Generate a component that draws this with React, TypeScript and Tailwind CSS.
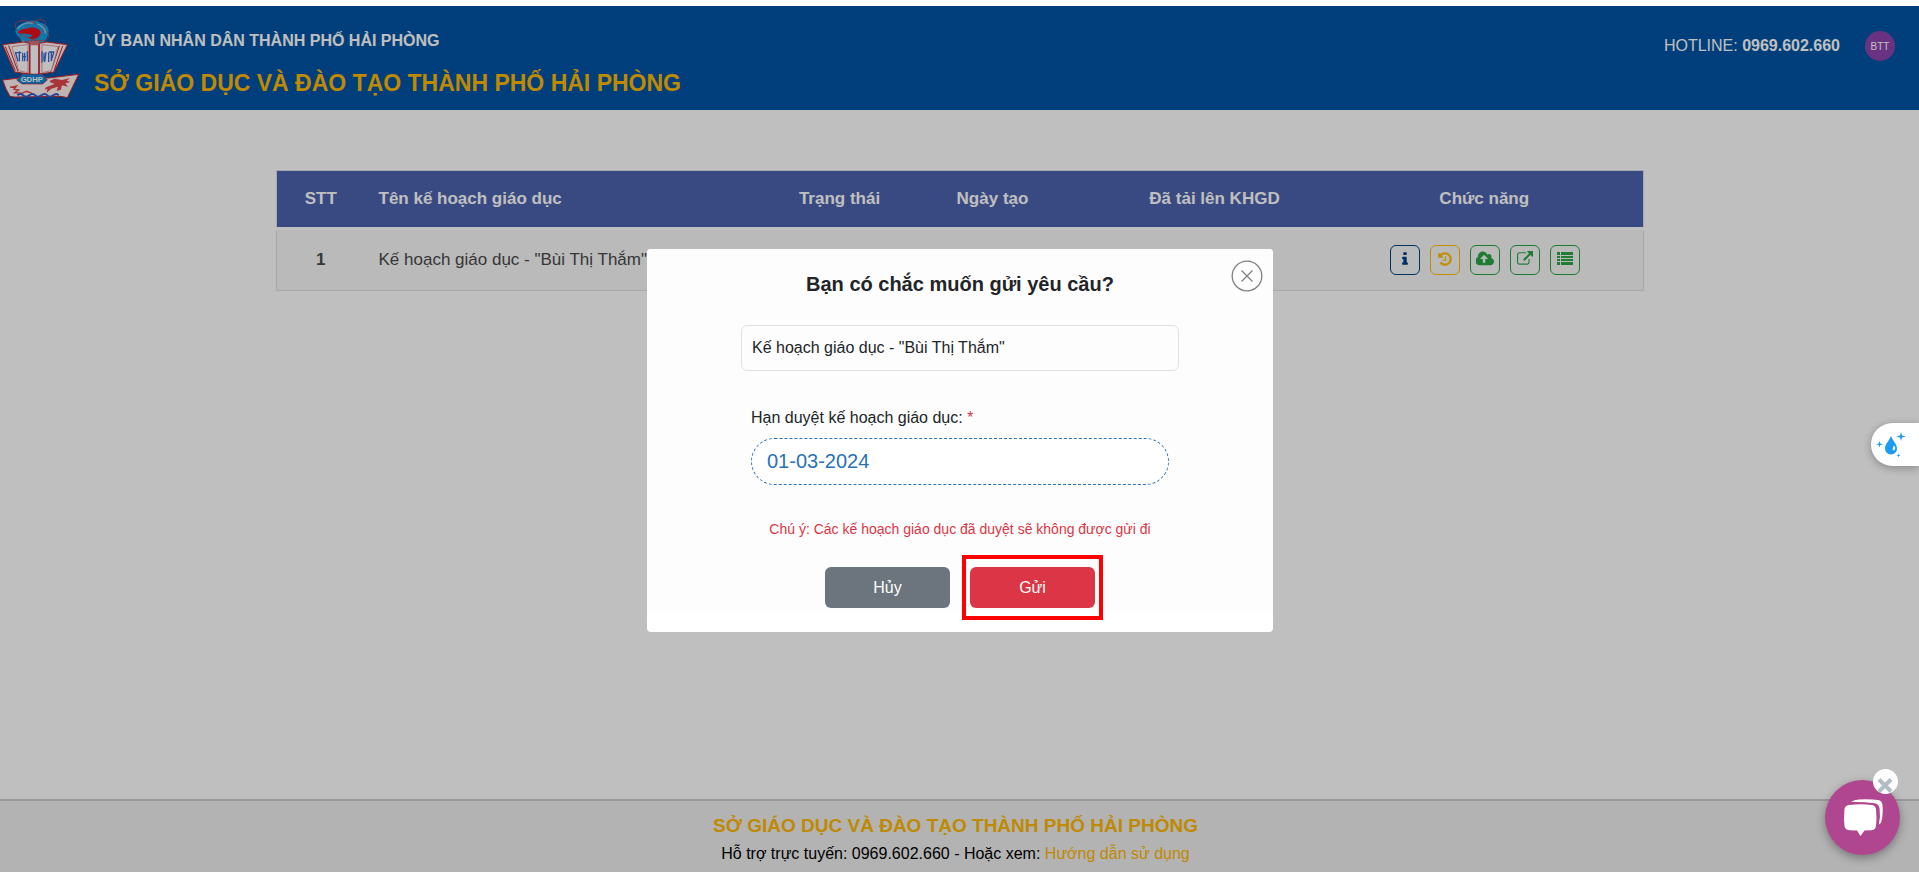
import type { ReactNode } from "react";

const columns = [
  { label: "STT", cell: "w-[88px] text-center" },
  { label: "Tên kế hoạch giáo dục", cell: "pl-3.5 text-left" },
  { label: "Trạng thái", cell: "w-[84px] text-center" },
  { label: "Ngày tạo", cell: "w-[222px] text-center" },
  { label: "Đã tải lên KHGD", cell: "w-[222px] text-center" },
  { label: "Chức năng", cell: "w-[318px] text-center" },
];

const actions = [
  {
    label: "Thông tin",
    tone: "border-[#004085] text-[#004085]",
    viewBox: "0 0 1792 1792",
    path: "M1216 1344v128q0 26-19 45t-45 19h-512q-26 0-45-19t-19-45v-128q0-26 19-45t45-19h64v-384h-64q-26 0-45-19t-19-45v-128q0-26 19-45t45-19h384q26 0 45 19t19 45v576h64q26 0 45 19t19 45zm-128-1152v192q0 26-19 45t-45 19h-256q-26 0-45-19t-19-45v-192q0-26 19-45t45-19h256q26 0 45 19t19 45z",
  },
  {
    label: "Lịch sử",
    tone: "border-[#ffc107] text-[#ffc107]",
    viewBox: "0 0 1792 1792",
    path: "M1664 896q0 156-61 298t-164 245-245 164-298 61q-172 0-327-72.5t-264-204.5q-7-10-6.5-22.5t8.5-20.5l137-138q10-9 25-9 16 2 23 12 73 95 179 147t225 52q104 0 198.5-40.5t163.5-109.5 109.5-163.5 40.5-198.5-40.5-198.5-109.5-163.5-163.5-109.5-198.5-40.5q-98 0-188 35.5t-160 101.5l137 138q31 30 14 69-17 40-59 40h-448q-26 0-45-19t-19-45v-448q0-42 40-59 39-17 69 14l130 129q107-101 244.5-156.5t284.5-55.5q156 0 298 61t245 164 164 245 61 298zm-640-288v448q0 14-9 23t-23 9h-320q-14 0-23-9t-9-23v-64q0-14 9-23t23-9h224v-352q0-14 9-23t23-9h64q14 0 23 9t9 23z",
  },
  {
    label: "Tải lên",
    tone: "border-[#28a745] text-[#28a745]",
    viewBox: "0 64 1856 1650",
    path: "M1216 864q0-14-9-23l-352-352q-9-9-23-9t-23 9l-351 351q-10 12-10 24 0 14 9 23t23 9h224v352q0 13 9.5 22.5t22.5 9.5h192q13 0 22.5-9.5t9.5-22.5v-352h224q13 0 22.5-9.5t9.5-22.5zm640 288q0 159-112.5 271.5t-271.5 112.5h-1088q-185 0-316.5-131.5t-131.5-316.5q0-130 70-240t188-165q-2-30-2-43 0-212 150-362t362-150q156 0 285.5 87t188.5 231q71-62 166-62 106 0 181 75t75 181q0 76-41 138 130 31 213.5 135.5t83.5 238.5z",
  },
  {
    label: "Mở liên kết",
    tone: "border-[#28a745] text-[#28a745]",
    viewBox: "0 0 1792 1792",
    path: "M1408 928v320q0 119-84.5 203.5t-203.5 84.5h-832q-119 0-203.5-84.5t-84.5-203.5v-832q0-119 84.5-203.5t203.5-84.5h704q14 0 23 9t9 23v64q0 14-9 23t-23 9h-704q-66 0-113 47t-47 113v832q0 66 47 113t113 47h832q66 0 113-47t47-113v-320q0-14 9-23t23-9h64q14 0 23 9t9 23zm384-864v512q0 26-19 45t-45 19-45-19l-176-176-652 652q-10 10-23 10t-23-10l-114-114q-10-10-10-23t10-23l652-652-176-176q-19-19-19-45t19-45 45-19h512q26 0 45 19t19 45z",
  },
  {
    label: "Danh sách",
    tone: "border-[#28a745] text-[#28a745]",
    viewBox: "0 0 16 16",
    path: "M0 1h3v3H0zM4 1h12v3H4zM0 5h3v2H0zM4 5h12v2H4zM0 8h3v2H0zM4 8h12v2H4zM0 11h3v3H0zM4 11h12v3H4z",
  },
];

function Logo() {
  return (
    <svg viewBox="0 54 240 240" className="size-20 shrink-0" role="img" aria-label="GDHP">
      <path d="M46 92c4-16 18-20 28-24 14-10 34-8 46 0 14 2 26 12 26 24 0 14-6 20-8 28-10 14-30 20-42 18-16 0-30-10-34-22-8-6-16-14-16-24z" fill="#14a0e4" />
      <g fill="none" stroke="#d8404c" strokeWidth="2">
        <ellipse cx="96" cy="92" rx="54" ry="24" transform="rotate(22 96 92)" />
        <ellipse cx="98" cy="92" rx="46" ry="22" transform="rotate(-38 98 92)" />
      </g>
      <path d="M52 86c12-14 30-20 46-16M112 72c16 6 26 18 24 28M66 122c6 6 12 8 18 8" fill="none" stroke="#7fd3f5" strokeWidth="4" />
      <path d="M54 100c4-14 16-12 26-14 8-4 22-6 32 0 12 4 12 16 4 24-8 8-26 8-36 2 8 1 14-2 18-6-14-6-30-4-44-6z" fill="#e8101c" />
      <path d="M8 134l62-8 18 4v92l-44-6z" fill="#fff1f1" stroke="#d8262e" strokeWidth="3" />
      <path d="M202 134l-62-8-22 4v92l44-6z" fill="#fff1f1" stroke="#d8262e" strokeWidth="3" />
      <path d="M16 140l30 72M26 137l28 78M188 138l-26 74M178 137l-26 78" stroke="#d8262e" strokeWidth="3" fill="none" />
      <path d="M36 140l48-6v84l-28-6zM174 140l-48-6v84l28-6z" fill="#fff" stroke="#d9747b" strokeWidth="2" />
      <path d="M46 156l8 28M58 154v30M48 158h16M68 158v26M74 158v26M66 170h12M82 154v30M126 154v34M132 158v26M138 156l-4 30M146 158v28M154 154v30M146 156h16M162 154l-8 28" stroke="#3c6bd0" strokeWidth="4" fill="none" />
      <path d="M90 124h26v98l-12 8-14-8z" fill="#fff" stroke="#d8262e" strokeWidth="3" />
      <path d="M86 124h34l-6 12H92z" fill="#d8737a" />
      <path d="M8 240l50-6h88l90-11-34 70-20-4-138 2-14-2-12-22z" fill="#fff1f1" stroke="#d8262e" strokeWidth="3" />
      <path d="M50 240l18-18h58l16 18-14 12H66z" fill="#0a86d6" stroke="#d8262e" strokeWidth="2" />
      <text x="62" y="246" fill="#fff" fontSize="23" fontWeight="700" className="font-['Liberation_Sans',sans-serif]">
        GDHP
      </text>
      <path d="M150 242l14-6 22 4 24-6-10 8 12 4-16 4 8 10-18-4-4 14-12 2 4-12-20 6-14 12 2-12-8 4 4-8 26-10-14-6z" fill="#e0454c" />
      <path d="M30 262l20-4-8 10 14 2-12 8 24 2M60 282l20-8 16 6" fill="none" stroke="#e0454c" strokeWidth="4" />
      <path d="M52 286q10-8 18 0t18 0 18 0 18 0 18 0 18 0 16 0" fill="none" stroke="#3158c4" strokeWidth="6" />
    </svg>
  );
}

function Field({ children, className }: { children: ReactNode; className: string }) {
  return <div className={className}>{children}</div>;
}

function PageHeader() {
  return (
    <header className="flex h-[104px] items-start bg-[#0055a4] pt-3 text-white">
      <Logo />
      <div className="ml-3.5 pt-[11px]">
        <p className="text-base/6 font-bold">ỦY BAN NHÂN DÂN THÀNH PHỐ HẢI PHÒNG</p>
        <h1 className="mt-3.5 text-[23px]/8 font-bold text-[#ffb700]">SỞ GIÁO DỤC VÀ ĐÀO TẠO THÀNH PHỐ HẢI PHÒNG</h1>
      </div>
      <div className="ml-auto flex items-center pt-[13px] pr-6">
        <p className="text-base/6">
          HOTLINE: <b>0969.602.660</b>
        </p>
        <button className="ml-[25px] size-[30px] rounded-full bg-[#8e44ad] text-[10px]">BTT</button>
      </div>
    </header>
  );
}

function PlanTable() {
  return (
    <table className="mx-auto w-[1368px] max-w-full table-fixed border-collapse border border-[#dee2e6]">
      <thead className="bg-[#4c63af] text-white">
        <tr className="h-[58px] border-b-3 border-[#fff]">
          {columns.map((c) => (
            <th key={c.label} className={`${c.cell} text-[17px] font-bold whitespace-nowrap`}>
              {c.label}
            </th>
          ))}
        </tr>
      </thead>
      <tbody className="bg-[#f8f8f8] text-[#4a4a4a]">
        <tr className="h-[62px]">
          <td className="text-center text-[17px] font-bold">1</td>
          <td className="pl-3.5 text-[17px] whitespace-nowrap">Kế hoạch giáo dục - "Bùi Thị Thắm"</td>
          <td />
          <td />
          <td />
          <td>
            <div className="flex justify-center gap-2.5 pl-0.5">
              {actions.map((a) => (
                <button
                  key={a.label}
                  aria-label={a.label}
                  className={`flex size-[30px] justify-center rounded-md border pt-[5px] ${a.tone}`}
                >
                  <svg viewBox={a.viewBox} className="h-4 w-[18px]" fill="currentColor">
                    <path d={a.path} />
                  </svg>
                </button>
              ))}
            </div>
          </td>
        </tr>
      </tbody>
    </table>
  );
}

function PageFooter() {
  return (
    <footer className="mt-auto h-[73px] border-t-2 border-[#cccccc] bg-[#efefef] pt-[11px] pr-2 text-center">
      <p className="text-[19px]/7 font-bold text-[#ffb700]">SỞ GIÁO DỤC VÀ ĐÀO TẠO THÀNH PHỐ HẢI PHÒNG</p>
      <p className="mt-0.5 text-base/6 text-black">
        Hỗ trợ trực tuyến: 0969.602.660 - Hoặc xem:{" "}
        <a href="#huong-dan" className="text-[#ffb700]">
          Hướng dẫn sử dụng
        </a>
      </p>
    </footer>
  );
}

function ConfirmDialog() {
  return (
    <div className="fixed inset-x-0 top-1.5 bottom-0 flex items-center justify-center bg-black/25 pt-[3px] pl-px">
      <form
        role="dialog"
        aria-labelledby="confirm-title"
        className="relative w-[626px] overflow-hidden rounded-sm bg-white pb-5 text-[#212529]"
        onSubmit={(e) => e.preventDefault()}
      >
        <div className="flex flex-col items-center bg-[#fdfdfd] pb-1">
          <h2 id="confirm-title" className="mt-[21px] text-xl/7 font-bold">
            Bạn có chắc muốn gửi yêu cầu?
          </h2>
          <Field className="mt-[27px] flex h-[46px] w-[438px] items-center rounded-md border border-[#dee2e6] px-2.5 text-base">
            Kế hoạch giáo dục - "Bùi Thị Thắm"
          </Field>
          <Field className="mt-[35px] flex w-[418px] flex-col">
            <label htmlFor="deadline" className="text-base/6">
              Hạn duyệt kế hoạch giáo dục: <span className="text-[#dc3545]">*</span>
            </label>
            <input
              id="deadline"
              defaultValue="01-03-2024"
              className="mt-2 h-[47px] rounded-full border border-dashed border-[#2a72b5] bg-white px-[15px] text-xl text-[#2a72b5] outline-none"
            />
          </Field>
          <p className="mt-[34px] text-sm/5 text-[#dc3545]">Chú ý: Các kế hoạch giáo dục đã duyệt sẽ không được gửi đi</p>
          <div className="mt-7 flex gap-5">
            <button type="button" className="h-[41px] w-[125px] rounded-md bg-[#6c757d] text-base text-white">
              Hủy
            </button>
            <div className="relative flex">
              <button type="submit" className="h-[41px] w-[125px] rounded-md bg-[#dc3545] text-base text-white">
                Gửi
              </button>
              <span className="pointer-events-none absolute -inset-x-2 -top-3 -bottom-3 border-4 border-[#ff0000]" />
            </div>
          </div>
        </div>
        <button type="button" aria-label="Đóng" className="absolute top-[11px] right-2.5 text-[#808080]">
          <svg viewBox="0 0 32 32" className="size-8" fill="none" stroke="currentColor" strokeWidth="1.3">
            <circle cx="16" cy="16" r="14.8" />
            <path d="M10.5 10.5l11 11M21.5 10.5l-11 11" />
          </svg>
        </button>
      </form>
    </div>
  );
}

function FloatingWidgets() {
  return (
    <>
      <button
        aria-label="Tiện ích"
        className="fixed top-[423px] right-0 flex h-[43px] w-12 items-center rounded-l-full bg-white pl-[5px] shadow-[0_2px_10px_rgba(0,0,0,0.3)]"
      >
        <svg viewBox="0 0 30 30" className="size-[30px]" fill="#1a9cf0">
          <path d="M15 6c2 5 6 8 6 12.500a5.700 5.700 0 0 1-12 0C9 14 13 11 15 6z" />
          <path d="M18 15.500c2 2 1.500 4.500-.5 5-1.500 0-1-3 .5-5z" fill="#dff2ff" />
          <path d="M25 2l1 3.500 4 1-4 1-1 3.500-1-3.500-4-1 4-1zM3.500 11l.8 2.500 2.700.8-2.700.8-.8 2.500-.8-2.500L0 14.300l2.700-.8zM22.500 23.500l.5 1.500 1.700.5-1.700.5-.5 1.500-.5-1.500-1.700-.5 1.700-.5z" />
        </svg>
      </button>
      <div className="fixed right-[19px] bottom-[17px]">
        <button
          aria-label="Trò chuyện"
          className="flex size-[75px] items-center justify-center rounded-full bg-[#b0468f] shadow-[0_3px_10px_rgba(0,0,0,0.35)]"
        >
          <svg viewBox="0 0 75 75" className="size-full" fill="#fff">
            <path d="M24 25q12-1.500 23 0 3.500.5 4 4 1 9 0 17-.5 4-4.500 4.200l-7 .3-4 5.500-3.500-5.500-8-.3q-4-.2-4.500-4.200-1-8 0-17 .5-3.500 4.500-4z" />
            <path d="M26 22q3-2.300 8-2.500 11-.5 19 .6 4 .7 4.500 5 .8 10-1.200 17-.8 2-2.500 2.400 1.800-8 .8-15.800-.6-5-5-5.500-11-1.500-23.600-1.200z" />
          </svg>
        </button>
        <button
          aria-label="Ẩn trò chuyện"
          className="absolute -top-[11px] right-0.5 flex size-[25px] items-center justify-center rounded-full bg-white"
        >
          <svg viewBox="0 0 25 25" className="size-full" fill="none" stroke="#b0bec5" strokeWidth="4">
            <path d="M6 10.500l12 12M18 10.500l-12 12" />
          </svg>
        </button>
      </div>
    </>
  );
}

export default function App() {
  return (
    <div className="flex min-h-screen flex-col bg-white pt-1.5 font-['Liberation_Sans',Arial,sans-serif]">
      <PageHeader />
      <main className="pt-[60px] pl-px">
        <PlanTable />
      </main>
      <PageFooter />
      <ConfirmDialog />
      <FloatingWidgets />
    </div>
  );
}
